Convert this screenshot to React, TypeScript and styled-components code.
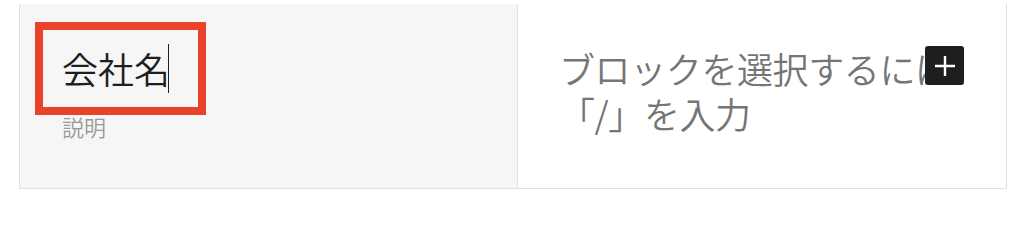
import styled, { createGlobalStyle } from "styled-components";

const GlobalStyle = createGlobalStyle`
  body {
    margin: 0;
    background: #ffffff;
    font-family: "Noto Sans CJK JP", "Noto Sans", sans-serif;
  }
`;

const Page = styled.div`
  padding: 4px 0 0 19px;
`;

const Table = styled.div`
  display: grid;
  grid-template-columns: 498px 488px;
  width: 988px;
  box-sizing: border-box;
  border: 1px solid #e0e0e0;
  border-top: none;
  height: 185px;
`;

const HeadCell = styled.div`
  background: #f6f6f6;
  border-right: 1px solid #e0e0e0;
  padding: 18px 0 0 15px;
  display: flex;
  flex-direction: column;
  align-items: flex-start;
`;

const BodyCell = styled.div`
  position: relative;
  background: #ffffff;
  padding: 42px 33px 0 41px;
`;

const Selected = styled.div`
  display: flex;
  align-items: center;
  border: 8px solid #e8432a;
  padding: 14px 29px 14px 19px;
  font-size: 36px;
  font-weight: 350;
  line-height: 45px;
  color: #1e1e1e;
`;

const Caret = styled.span`
  display: inline-block;
  width: 1px;
  height: 49px;
  margin-left: -2px;
  background: #1e1e1e;
`;

const Caption = styled.div`
  margin: -3px 0 0 27px;
  font-size: 22px;
  font-weight: 350;
  line-height: 28px;
  color: #9a9a9a;
`;

const Placeholder = styled.p`
  margin: 0;
  font-size: 36px;
  font-weight: 350;
  letter-spacing: -0.4px;
  line-height: 45px;
  color: #757575;
`;

const Inserter = styled.button`
  position: absolute;
  left: 407px;
  top: 42px;
  width: 39px;
  height: 39px;
  padding: 0;
  border: none;
  border-radius: 3px;
  background: #1e1e1e;
  display: flex;
  align-items: center;
  justify-content: center;
`;

export default function App() {
  return (
    <>
      <GlobalStyle />
      <Page>
        <Table>
          <HeadCell>
            <Selected>
              会社名
              <Caret />
            </Selected>
            <Caption>説明</Caption>
          </HeadCell>
          <BodyCell>
            <Placeholder>ブロックを選択するには「/」を入力</Placeholder>
            <Inserter>
              <svg width="24" height="24" viewBox="0 0 24 24">
                <path d="M12 2v20M2 12h20" stroke="#ffffff" strokeWidth="2.4" />
              </svg>
            </Inserter>
          </BodyCell>
        </Table>
      </Page>
    </>
  );
}
